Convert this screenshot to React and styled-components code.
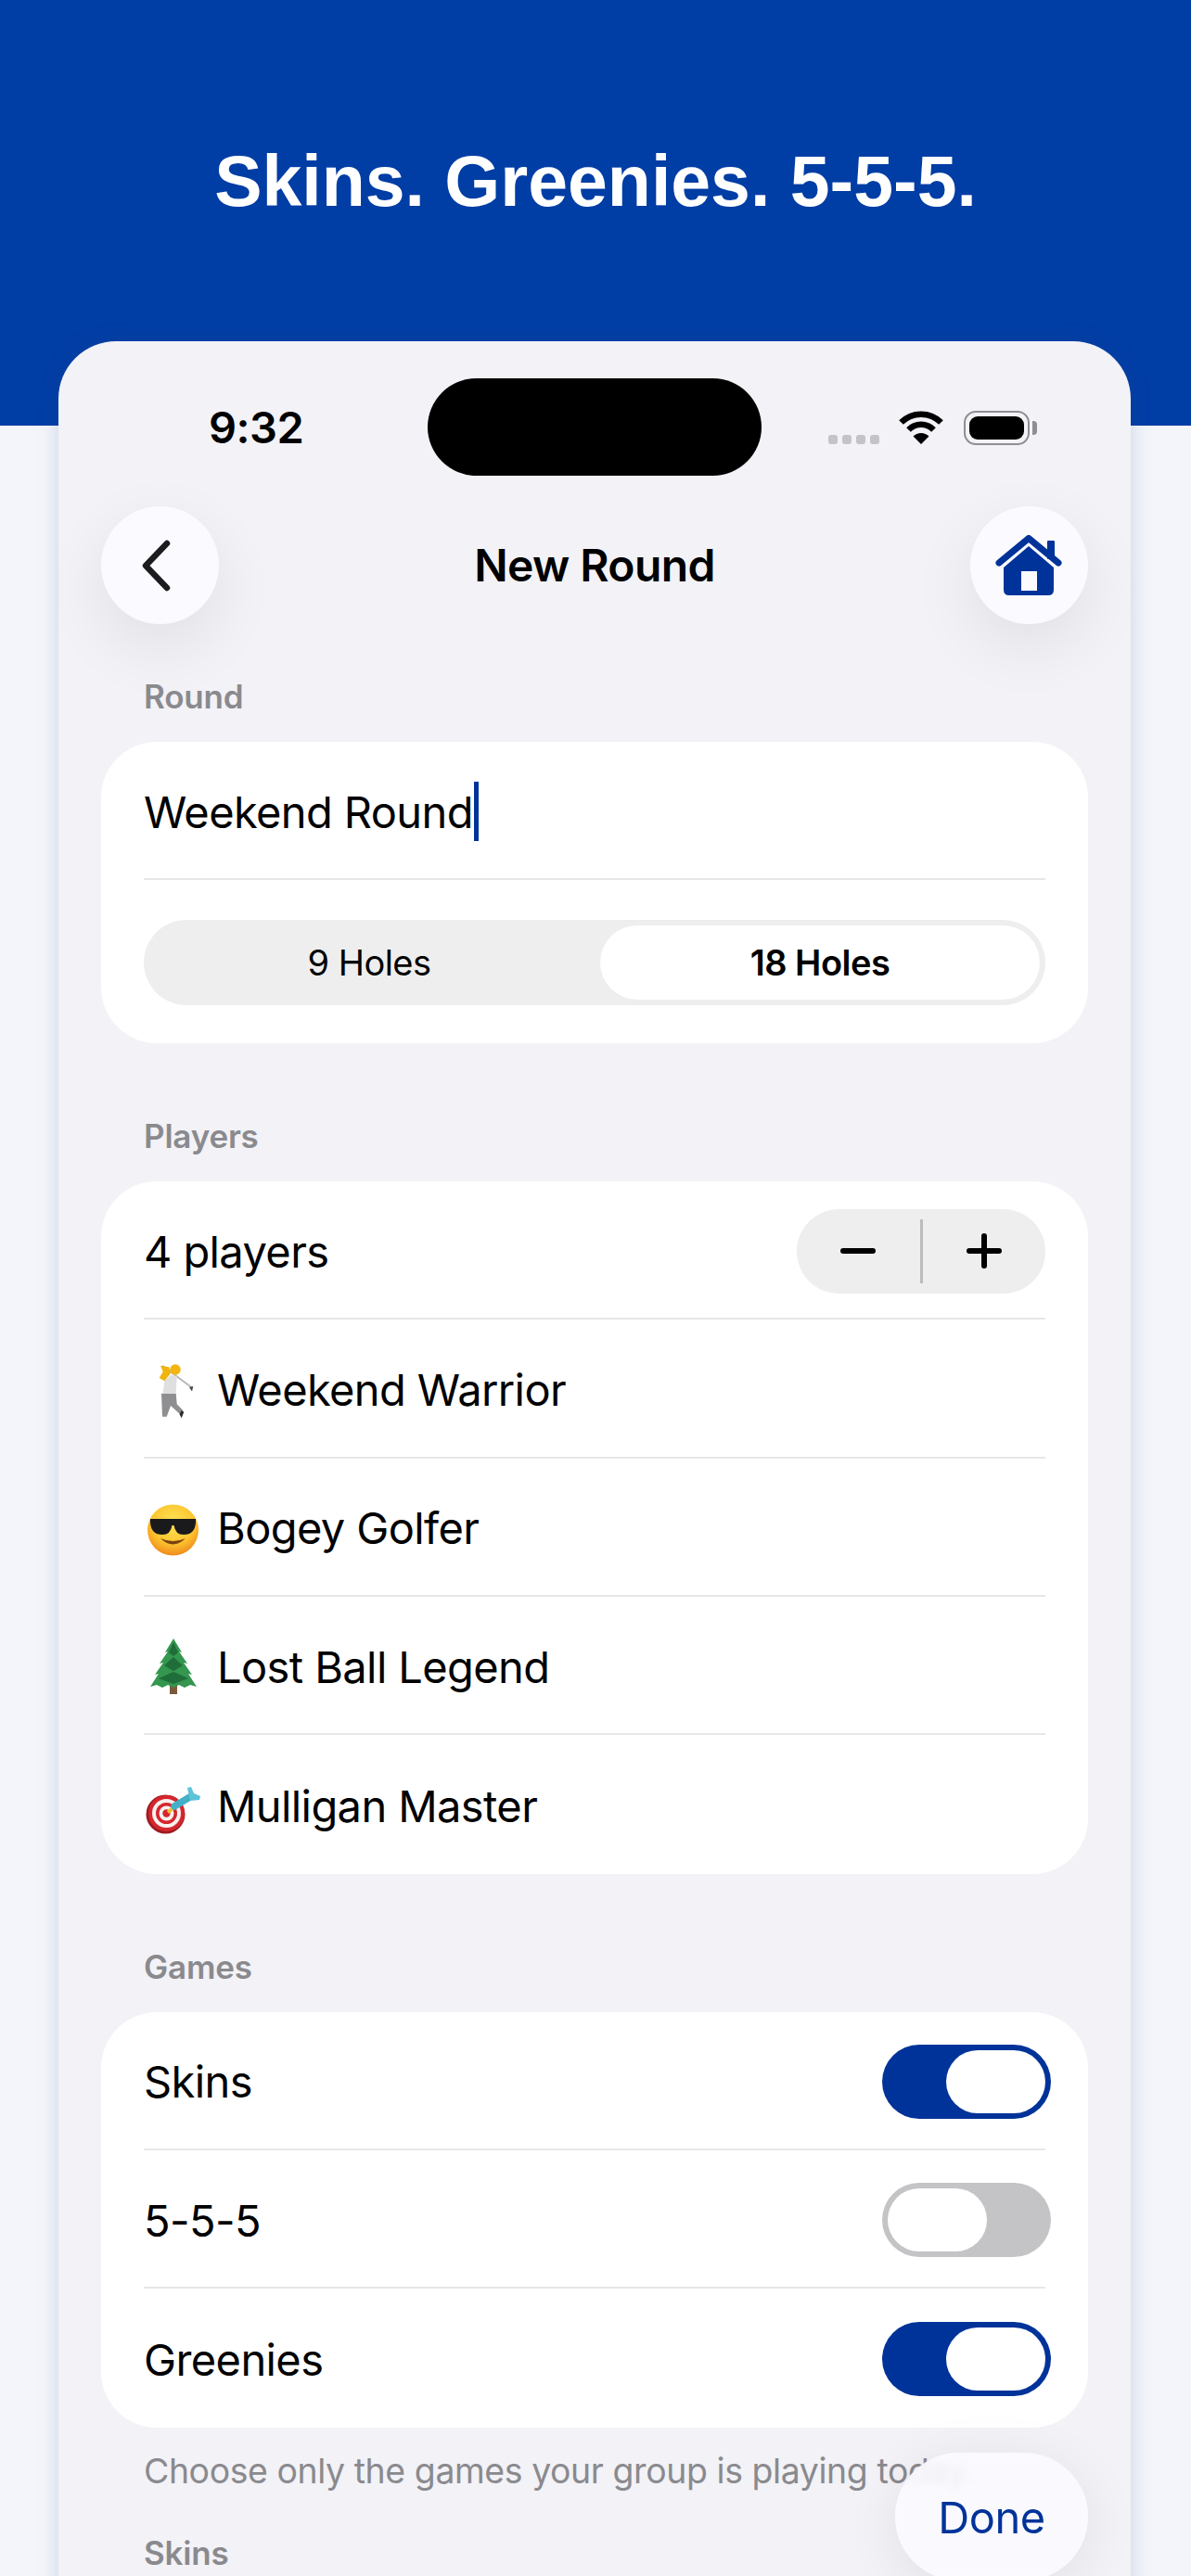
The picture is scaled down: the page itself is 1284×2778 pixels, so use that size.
import styled, { createGlobalStyle } from 'styled-components';

const BLUE = '#003399';

const GlobalStyle = createGlobalStyle`
    html, body {
        margin: 0;
        padding: 0;
        background: #f3f5fb;
    }
    * {
        box-sizing: border-box;
    }
`;

const Page = styled.div`
    position: relative;
    width: 1284px;
    height: 2778px;
    overflow: hidden;
    background: #f3f5fb;
    font-family: Inter, "Liberation Sans", sans-serif;
    color: #000;
`;

const Hero = styled.header`
    height: 459px;
    padding-top: 150px;
    background: #003da5;
    text-align: center;
`;

const HeroTitle = styled.h1`
    margin: 0;
    font-family: "Liberation Sans", Arial, sans-serif;
    font-size: 77px;
    line-height: 90px;
    font-weight: 700;
    color: #fff;
`;

const Phone = styled.main`
    width: 1156px;
    min-height: 2450px;
    margin: -91px 0 0 63px;
    padding: 40px 46px 0;
    background: #f2f2f7;
    border-radius: 62px 62px 0 0;
    box-shadow: 0 0 22px rgba(50, 80, 140, 0.2);
`;

const StatusBar = styled.div`
    display: grid;
    grid-template-columns: 1fr 360px 1fr;
    height: 105px;
`;

const Time = styled.div`
    padding: 24px 0 0 116px;
    font-size: 47px;
    line-height: 58px;
    font-weight: 600;
    letter-spacing: -0.5px;
`;

const Island = styled.div`
    background: #000;
    border-radius: 53px;
`;

const StatusIcons = styled.div`
    display: flex;
    align-items: flex-start;
    padding: 35px 0 0 72px;
`;

const SignalDots = styled.div`
    display: flex;
    gap: 5px;
    margin: 26px 21px 0 0;
`;

const SignalDot = styled.span`
    width: 10px;
    height: 10px;
    border-radius: 3px;
    background: #c4c4c8;
`;

const Battery = styled.div`
    position: relative;
    width: 71px;
    height: 37px;
    margin-left: 22px;
    padding: 4px;
    border: 2px solid #8e8e93;
    border-radius: 13px;

    &::after {
        content: '';
        position: absolute;
        top: 9px;
        right: -10px;
        width: 5px;
        height: 15px;
        border-radius: 0 4px 4px 0;
        background: #8e8e93;
    }
`;

const BatteryFill = styled.div`
    width: 100%;
    height: 100%;
    border-radius: 9px;
    background: #000;
`;

const NavBar = styled.nav`
    display: flex;
    align-items: center;
    justify-content: space-between;
    margin-top: 33px;
`;

const RoundButton = styled.button`
    display: flex;
    align-items: center;
    justify-content: center;
    width: 127px;
    height: 127px;
    padding: 0;
    border: none;
    border-radius: 50%;
    background: #fbfbff;
    box-shadow: 0 24px 70px rgba(0, 0, 0, 0.08);
`;

const NavTitle = styled.div`
    font-size: 48px;
    line-height: 56px;
    font-weight: 600;
    letter-spacing: -0.6px;
`;

const SectionLabel = styled.div`
    margin: ${(p) => p.$top}px 0 29px 46px;
    font-size: 35px;
    line-height: 40px;
    font-weight: 600;
    letter-spacing: -0.2px;
    color: #8a8a8e;
`;

const Card = styled.section`
    display: flow-root;
    padding: 0 46px;
    border-radius: 60px;
    background: #fff;
`;

const Row = styled.div`
    display: flex;
    align-items: center;
    justify-content: space-between;
    height: 149.33px;
    padding-top: 3px;
    border-bottom: ${(p) => (p.$last ? 'none' : '2px solid #e7e7e9')};
    font-size: 47px;
    letter-spacing: -0.6px;
`;

const InputRow = styled(Row)`
    height: 149px;
    justify-content: flex-start;
`;

const Cursor = styled.span`
    width: 5px;
    height: 64px;
    margin-left: 1px;
    background: ${BLUE};
`;

const Segmented = styled.div`
    display: grid;
    grid-template-columns: 1fr 1fr;
    gap: 12px;
    height: 92px;
    margin: 43px 0 41px;
    padding: 6px;
    border-radius: 46px;
    background: #eeeeef;
`;

const Segment = styled.div`
    display: flex;
    align-items: center;
    justify-content: center;
    border-radius: 40px;
    background: ${(p) => (p.$active ? '#fff' : 'transparent')};
    font-size: 38px;
    font-weight: ${(p) => (p.$active ? 600 : 400)};
    letter-spacing: -0.5px;
`;

const Stepper = styled.div`
    display: flex;
    align-items: center;
    width: 268px;
    height: 91px;
    border-radius: 46px;
    background: #eeeeef;
`;

const StepButton = styled.div`
    display: flex;
    flex: 1;
    align-items: center;
    justify-content: center;
`;

const StepDivider = styled.span`
    width: 3px;
    height: 69px;
    background: #bcbcbe;
`;

const PlayerName = styled.div`
    display: flex;
    align-items: center;
    gap: 19px;
`;

const EmojiBox = styled.svg`
    flex: none;
    width: 60px;
    height: 60px;
    overflow: visible;
`;

const Track = styled.div`
    display: flex;
    justify-content: ${(p) => (p.$on ? 'flex-end' : 'flex-start')};
    width: 182px;
    height: 80px;
    margin-right: -6px;
    padding: 6px;
    border-radius: 40px;
    background: ${(p) => (p.$on ? BLUE : '#c4c4c6')};
`;

const Knob = styled.span`
    width: 107px;
    height: 68px;
    border-radius: 34px;
    background: #fff;
`;

const Hint = styled.p`
    margin: 25px 0 46px 46px;
    font-size: 37.4px;
    line-height: 44px;
    letter-spacing: -0.4px;
    white-space: nowrap;
    color: #8a8a8e;
`;

const DoneButton = styled.button`
    position: absolute;
    top: 2645px;
    left: 965px;
    width: 208px;
    height: 138px;
    border: none;
    border-radius: 69px;
    background: rgba(251, 251, 255, 0.88);
    backdrop-filter: blur(4px);
    box-shadow: 0 10px 60px rgba(0, 0, 0, 0.08);
    font-family: inherit;
    font-size: 47px;
    letter-spacing: -0.4px;
    color: ${BLUE};
`;

function WifiIcon() {
    return (
        <svg width="48" height="36" viewBox="0 0 48 36">
            <path d="M2.5 12.5 A30.5 30.5 0 0 1 45.5 12.5" fill="none" stroke="#000" strokeWidth="6.5" />
            <path d="M10.5 20.5 A19 19 0 0 1 37.5 20.5" fill="none" stroke="#000" strokeWidth="6.5" />
            <path d="M24 36 L15.5 27.5 A12 12 0 0 1 32.5 27.5 Z" fill="#000" />
        </svg>
    );
}

function BackIcon() {
    return (
        <svg width="40" height="60" viewBox="0 0 40 60">
            <path d="M27 6 L4 30 L27 54" fill="none" stroke="#1c1c1e" strokeWidth="6.5" strokeLinecap="round" strokeLinejoin="round" />
        </svg>
    );
}

function HomeIcon() {
    return (
        <svg width="72" height="66" viewBox="0 0 72 66">
            <rect x="56" y="6" width="8" height="20" rx="1" fill={BLUE} />
            <path d="M4 30 L36 3.5 L68 30" fill="none" stroke={BLUE} strokeWidth="7" strokeLinecap="round" strokeLinejoin="round" />
            <path d="M36 12 L63 35 V59 Q63 65 57 65 H15 Q9 65 9 59 V35 Z" fill={BLUE} />
            <rect x="28" y="39" width="17" height="21" fill="#fbfbff" />
        </svg>
    );
}

function MinusIcon() {
    return (
        <svg width="40" height="40" viewBox="0 0 40 40">
            <path d="M4 20 H36" stroke="#000" strokeWidth="6" strokeLinecap="round" />
        </svg>
    );
}

function PlusIcon() {
    return (
        <svg width="40" height="40" viewBox="0 0 40 40">
            <path d="M4 20 H36 M20 4 V36" stroke="#000" strokeWidth="6" strokeLinecap="round" />
        </svg>
    );
}

function GolferEmoji() {
    return (
        <EmojiBox viewBox="0 0 60 60">
            <path d="M20 4.7 L51.3 28" stroke="#b8b8ba" strokeWidth="2" />
            <path d="M49 28 L53.3 27 L52 32.5 Z" fill="#444" />
            <path d="M19 34.7 L34.7 34.7 L35.7 46.3 L42.3 53 L39 57 L29 48 L24.7 59.7 L20 59.7 Z" fill="#8f8f91" />
            <path d="M40.7 53 L43.3 54.7 L40.7 61.3 L38.5 57 Z" fill="#2c2c2e" />
            <path d="M22.3 21.3 L29 14.7 L35.7 16.3 L34.7 34.7 L20.7 34.7 Z" fill="#dfdfdf" />
            <path d="M18 4.7 L27.3 6.3 L29 13 L22.3 21.3 L16.7 18 L20.7 11.3 Z" fill="#f0b410" />
            <circle cx="34" cy="9" r="5.8" fill="#f3b512" />
        </EmojiBox>
    );
}

function SunglassesEmoji() {
    return (
        <EmojiBox viewBox="0 0 60 60">
            <defs>
                <radialGradient id="faceGrad" cx="50%" cy="35%" r="65%">
                    <stop offset="0%" stopColor="#ffe55a" />
                    <stop offset="65%" stopColor="#fdc42f" />
                    <stop offset="100%" stopColor="#f08a1c" />
                </radialGradient>
            </defs>
            <circle cx="31.5" cy="32" r="27.5" fill="url(#faceGrad)" />
            <path d="M7 20 H56 V24 Q55 37 43 37 Q34 37 32.5 27 H30.5 Q29 37 20 37 Q8 37 7 24 Z" fill="#1a1a1c" />
            <path d="M18 41 Q31.5 47 45 41 Q31.5 54 18 41 Z" fill="#7a4310" />
        </EmojiBox>
    );
}

function TreeEmoji() {
    return (
        <EmojiBox viewBox="0 0 60 60">
            <rect x="28" y="50" width="8" height="10" fill="#7b5a3a" />
            <path d="M32 0 L41 15 L38 14 L47 27 L43 26 L52 39 L48 38 L57 52 L50 50 L44 53 L38 50 L32 53 L26 50 L20 53 L14 50 L7 52 L16 38 L12 39 L21 26 L17 27 L26 14 L23 15 Z" fill="#34964f" />
            <path d="M32 4 L37 15 L32 19 L27 15 Z M32 20 L42 29 L32 35 L22 29 Z M32 36 L48 43 L32 49 L16 43 Z" fill="#1f6d38" />
        </EmojiBox>
    );
}

function TargetEmoji() {
    return (
        <EmojiBox viewBox="0 0 60 60">
            <circle cx="23.5" cy="39.5" r="21" fill="#9e1b22" />
            <circle cx="24.5" cy="38.5" r="19.5" fill="#d5262e" />
            <circle cx="24.5" cy="38.5" r="15.5" fill="#f7f1ef" />
            <circle cx="24.5" cy="38.5" r="11.5" fill="#d5262e" />
            <circle cx="24.5" cy="38.5" r="8" fill="#f7f1ef" />
            <circle cx="24.5" cy="38.5" r="4.2" fill="#d5262e" />
            <path d="M26 37.5 L34 30.7" stroke="#f0c030" strokeWidth="4" />
            <path d="M33 31 L50 20.7" stroke="#43b0c8" strokeWidth="7.5" strokeLinecap="round" />
            <path d="M47 11 L51 10 L54 17 L61 20 L60 24 L50 25 Z" fill="#5cc3d8" />
        </EmojiBox>
    );
}

const players = [
    { name: 'Weekend Warrior', Emoji: GolferEmoji },
    { name: 'Bogey Golfer', Emoji: SunglassesEmoji },
    { name: 'Lost Ball Legend', Emoji: TreeEmoji },
    { name: 'Mulligan Master', Emoji: TargetEmoji },
];

const games = [
    { name: 'Skins', on: true },
    { name: '5-5-5', on: false },
    { name: 'Greenies', on: true },
];

export default function App() {
    return (
        <Page>
            <GlobalStyle />
            <Hero>
                <HeroTitle>Skins. Greenies. 5-5-5.</HeroTitle>
            </Hero>
            <Phone>
                <StatusBar>
                    <Time>9:32</Time>
                    <Island />
                    <StatusIcons>
                        <SignalDots>
                            <SignalDot />
                            <SignalDot />
                            <SignalDot />
                            <SignalDot />
                        </SignalDots>
                        <WifiIcon />
                        <Battery>
                            <BatteryFill />
                        </Battery>
                    </StatusIcons>
                </StatusBar>

                <NavBar>
                    <RoundButton>
                        <BackIcon />
                    </RoundButton>
                    <NavTitle>New Round</NavTitle>
                    <RoundButton>
                        <HomeIcon />
                    </RoundButton>
                </NavBar>

                <SectionLabel $top={58}>Round</SectionLabel>
                <Card>
                    <InputRow>
                        Weekend Round
                        <Cursor />
                    </InputRow>
                    <Segmented>
                        <Segment>9 Holes</Segment>
                        <Segment $active>18 Holes</Segment>
                    </Segmented>
                </Card>

                <SectionLabel $top={80}>Players</SectionLabel>
                <Card>
                    <Row>
                        4 players
                        <Stepper>
                            <StepButton>
                                <MinusIcon />
                            </StepButton>
                            <StepDivider />
                            <StepButton>
                                <PlusIcon />
                            </StepButton>
                        </Stepper>
                    </Row>
                    {players.map(({ name, Emoji }, i) => (
                        <Row key={name} $last={i === players.length - 1}>
                            <PlayerName>
                                <Emoji />
                                {name}
                            </PlayerName>
                        </Row>
                    ))}
                </Card>

                <SectionLabel $top={80}>Games</SectionLabel>
                <Card>
                    {games.map((game, i) => (
                        <Row key={game.name} $last={i === games.length - 1}>
                            {game.name}
                            <Track $on={game.on}>
                                <Knob />
                            </Track>
                        </Row>
                    ))}
                </Card>
                <Hint>Choose only the games your group is playing today.</Hint>
                <SectionLabel $top={0}>Skins</SectionLabel>
            </Phone>
            <DoneButton>Done</DoneButton>
        </Page>
    );
}
